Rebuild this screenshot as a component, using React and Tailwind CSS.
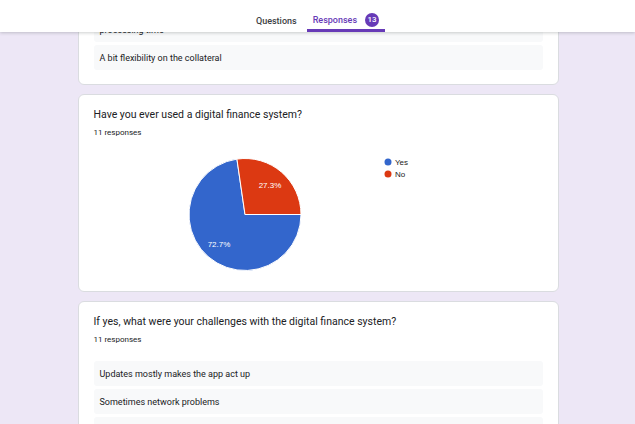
import React from "react";

function Row({ children, tall }) {
  return (
    <div className={`flex items-center rounded-[3px] bg-[#f8f9fa] px-[6px] text-[9px] leading-[12px] text-[#202124] ${tall ? "h-[37px]" : "h-[25px]"}`}>
      <span>{children}</span>
    </div>
  );
}

function Card({ children, className = "" }) {
  return (
    <div className={`w-[481px] shrink-0 rounded-[6px] border border-[#dadce0] bg-white px-[15px] ${className}`}>
      {children}
    </div>
  );
}

function Pie() {
  return (
    <svg width="451" height="153" viewBox="0 0 451 153" className="block">
      <path d="M151 76.5 L207 76.5 A56 56 0 1 1 142.93 21.08 Z" fill="#3366cc" stroke="#ffffff" strokeWidth="1" />
      <path d="M151 76.5 L142.93 21.08 A56 56 0 0 1 207 76.5 Z" fill="#dc3912" stroke="#ffffff" strokeWidth="1" />
      <text x="176" y="50" fill="#ffffff" fontSize="8" textAnchor="middle" fontFamily="Arial, 'Liberation Sans', sans-serif">27.3%</text>
      <text x="125" y="109" fill="#ffffff" fontSize="8" textAnchor="middle" fontFamily="Arial, 'Liberation Sans', sans-serif">72.7%</text>
      <circle cx="294" cy="24" r="3.5" fill="#3366cc" />
      <text x="301" y="27" fill="#222222" fontSize="8" fontFamily="Arial, 'Liberation Sans', sans-serif">Yes</text>
      <circle cx="294" cy="36" r="3.5" fill="#dc3912" />
      <text x="301" y="39" fill="#222222" fontSize="8" fontFamily="Arial, 'Liberation Sans', sans-serif">No</text>
    </svg>
  );
}

export default function App() {
  return (
    <div className="relative h-[424px] w-[635px] overflow-hidden bg-[#ede7f6] font-['Roboto',sans-serif]">
      <div className="absolute inset-x-0 top-0 z-10 flex h-8 items-end justify-center gap-[4px] bg-white shadow-[0_1px_3px_rgba(60,64,67,0.25)]">
        <div className="flex items-center border-b-[3px] border-transparent px-[6px] pb-[2px] text-[9px] font-medium leading-[12px] text-[#3c4043]">
          Questions
        </div>
        <div className="flex items-center rounded-t-[2px] border-b-[3px] border-[#673ab7] px-[6px] pb-[2px] text-[9px] font-medium leading-[12px] text-[#673ab7]">
          <span>Responses</span>
          <span className="ml-[8px] flex h-[14px] w-[14px] items-center justify-center rounded-full bg-[#673ab7] text-[8px] font-medium text-white">13</span>
        </div>
      </div>

      <div className="flex flex-col items-center gap-[9px] pl-px" style={{ marginTop: "-11px" }}>
        <Card className="pt-[15px] pb-[14px]">
          <div className="flex flex-col gap-[3px]">
            <Row tall>
              Reduce the interest rates and
              <br />
              processing time
            </Row>
            <Row>A bit flexibility on the collateral</Row>
          </div>
        </Card>

        <Card className="pt-[12px]">
          <div className="text-[10.5px] leading-[15px] text-[#202124]">Have you ever used a digital finance system?</div>
          <div className="mt-[5px] text-[8px] leading-[11px] text-[#202124]">11 responses</div>
          <Pie />
        </Card>

        <Card className="pt-[12px] pb-[15px]">
          <div className="text-[10.5px] leading-[15px] text-[#202124]">If yes, what were your challenges with the digital finance system?</div>
          <div className="mt-[5px] text-[8px] leading-[11px] text-[#202124]">11 responses</div>
          <div className="mt-[16px] flex flex-col gap-[3px]">
            <Row>Updates mostly makes the app act up</Row>
            <Row>Sometimes network problems</Row>
            <Row />
          </div>
        </Card>
      </div>
    </div>
  );
}
